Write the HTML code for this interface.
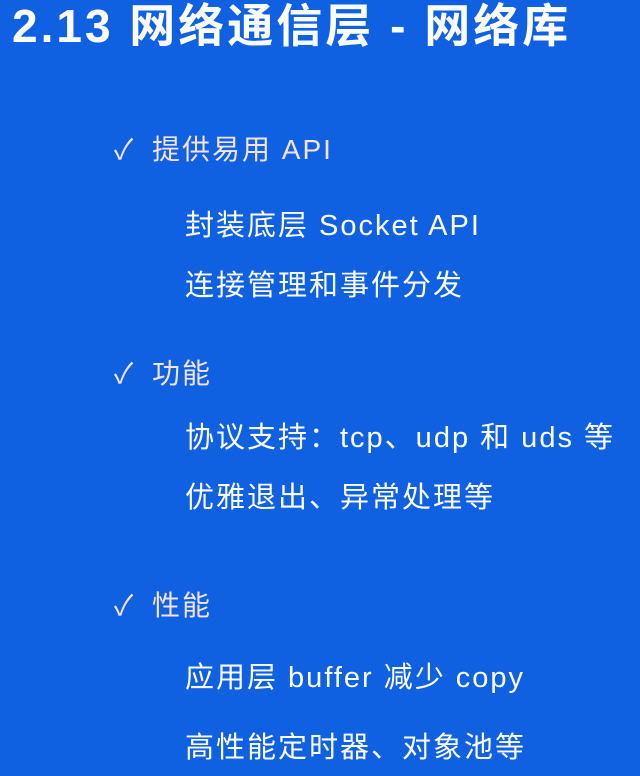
<!DOCTYPE html>
<html><head><meta charset="utf-8"><style>
html,body{margin:0;padding:0}
body{width:640px;height:776px;background:#1060e2;position:relative;overflow:hidden;font-family:"Liberation Sans","Noto Sans CJK SC",sans-serif;color:#fff}
.t{position:absolute;white-space:nowrap;line-height:40px}
.title{left:12px;top:3px;font-size:46px;font-weight:bold;letter-spacing:3px;line-height:46px}
.h{left:114px;font-size:28px;color:#f6e4e4;letter-spacing:2px}
.h span{display:inline-block;width:38px}
.s{left:185px;font-size:29px;letter-spacing:2px}
</style></head><body>
<div class="t title">2.13 网络通信层 - 网络库</div>
<div class="t h" style="top:130px"><span>✓</span>提供易用 API</div>
<div class="t s" style="top:206px">封装底层 Socket API</div>
<div class="t s" style="top:266px">连接管理和事件分发</div>
<div class="t h" style="top:354px"><span>✓</span>功能</div>
<div class="t s" style="top:418px">协议支持：tcp、udp 和 uds 等</div>
<div class="t s" style="top:478px">优雅退出、异常处理等</div>
<div class="t h" style="top:586px"><span>✓</span>性能</div>
<div class="t s" style="top:658px">应用层 buffer 减少 copy</div>
<div class="t s" style="top:728px">高性能定时器、对象池等</div>
</body></html>
